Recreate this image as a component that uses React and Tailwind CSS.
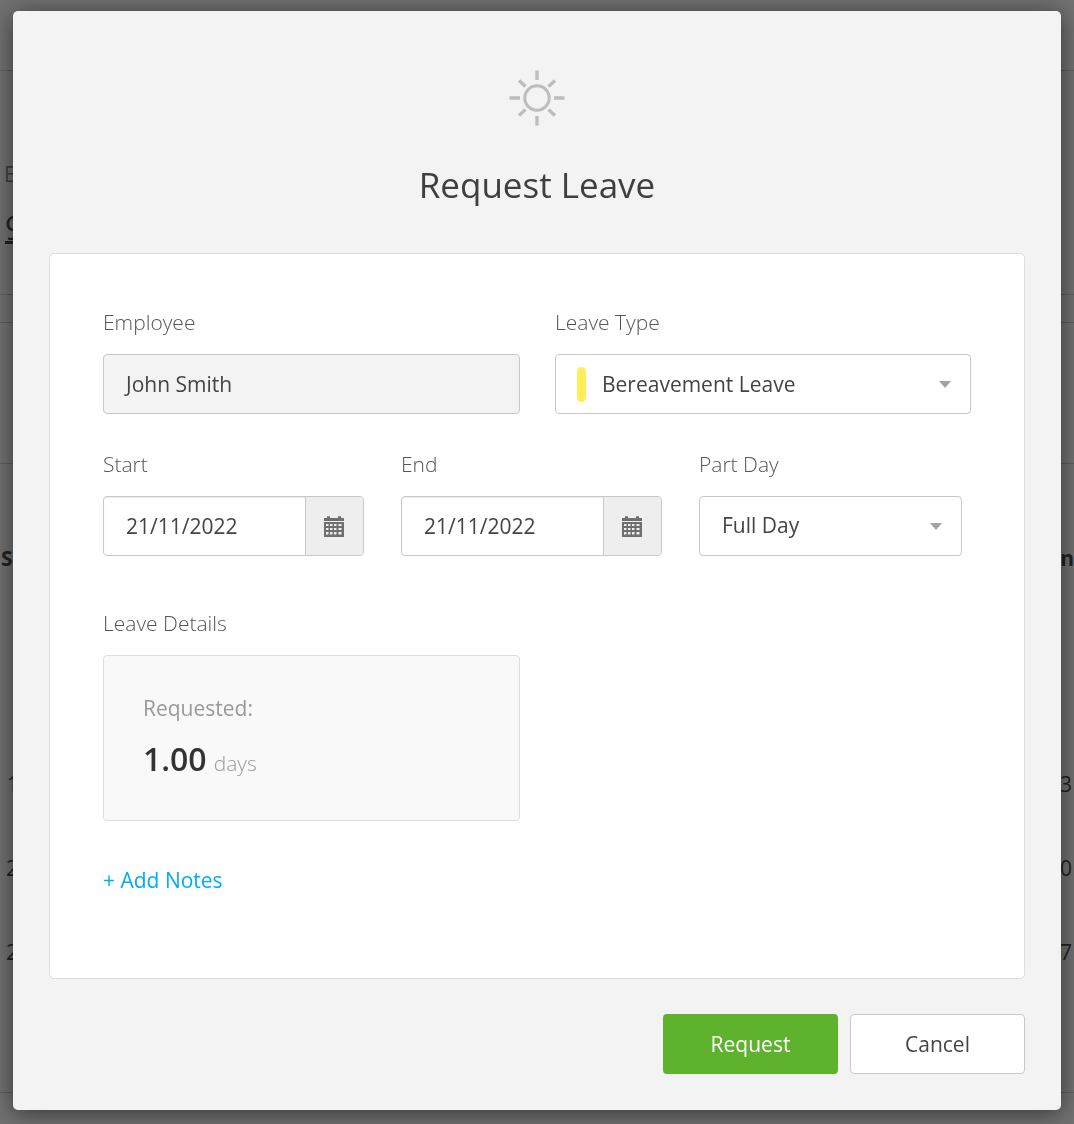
function Sun() {
  return (
    <svg width="56" height="56" viewBox="0 0 56 56" fill="none" stroke="#bdbdbd" strokeWidth="3.4">
      <circle cx="28" cy="28" r="12.2" strokeWidth="3" />
      <path d="M28 0.5V10M28 46V55.5M0.5 28H11M45 28H55.5M10 10.5L16.5 16.5M46 10.5L39.5 16.5M10 45.5L16.5 39.5M46 45.5L39.5 39.5" />
    </svg>
  );
}

function Cal() {
  return (
    <svg width="20" height="22" viewBox="0 0 20 22" fill="#6f6f6f">
      <path d="M0 3H3V1.2H6V3H14V1.2H17V3H20V6H0Z" />
      <path fillRule="evenodd" d="M0 7H20V22H0ZM2 9V11H4.5V9ZM6 9V11H8.5V9ZM10 9V11H12.5V9ZM14.5 9V11H17.5V9ZM2 13V15H4.5V13ZM6 13V15H8.5V13ZM10 13V15H12.5V13ZM14.5 13V15H17.5V13ZM2 17V19.5H4.5V17ZM6 17V19.5H8.5V17ZM10 17V19.5H12.5V17ZM14.5 17V19.5H17.5V17Z" />
    </svg>
  );
}

function Caret() {
  return <span className="w-0 h-0 border-l-[6.5px] border-r-[6.5px] border-t-[7px] border-l-transparent border-r-transparent border-t-[#a3a3a3]" />;
}

function Label({ children }) {
  return <div className="text-[21px] leading-[26px] font-light text-[#555] mb-[19px]">{children}</div>;
}

function DateInput({ label, value, className }) {
  return (
    <div className={className}>
      <Label>{label}</Label>
      <div className="h-[60px] flex border border-[#c8c8c8] rounded-[4px] bg-white overflow-hidden shadow-[inset_0_1px_1px_rgba(0,0,0,0.08)]">
        <div className="flex-1 pl-[22px] pt-[2px] flex items-center text-[21px] text-[#444]">{value}</div>
        <div className="w-[58px] pr-[2px] border-l border-[#c8c8c8] bg-[#eeeeee] flex items-center justify-center">
          <Cal />
        </div>
      </div>
    </div>
  );
}

function BackgroundRow({ left, right, className = "" }) {
  return (
    <div className={`flex justify-between text-[21px] text-[#222] ${className}`}>
      <span>{left}</span>
      <span>{right}</span>
    </div>
  );
}

export default function App() {
  return (
    <div className="relative w-[1074px] h-[1124px] overflow-hidden bg-[#727272] font-['Open_Sans',sans-serif]">
      <div className="h-[71px] border-b border-[#5e5e5e]" />
      <div className="pl-[4px] pt-[89px] text-[21px] leading-[28px] text-[#3f3f3f]">E</div>
      <div className="pl-[5px] pt-[20px] text-[32px] leading-[40px] font-medium text-[#222] underline underline-offset-[1px]">9</div>
      <div className="mt-[46px] border-b border-[#5e5e5e]" />
      <div className="mt-[27px] border-b border-[#5e5e5e]" />
      <div className="mt-[140px] border-b border-[#5e5e5e]" />
      <BackgroundRow left="S" right="n" className="mt-[80px] font-bold leading-[28px] pl-[1px]" />
      <BackgroundRow left="1" right="3" className="mt-[198px] leading-[28px] pl-[7px] pr-[2px]" />
      <BackgroundRow left="2" right="0" className="mt-[56px] leading-[28px] pl-[6px] pr-[2px]" />
      <BackgroundRow left="2" right="7" className="mt-[56px] leading-[28px] pl-[6px] pr-[2px]" />
      <div className="mt-[126px] border-b border-[#5e5e5e]" />

      <div className="absolute left-[13px] top-[11px] w-[1048px] h-[1099px] will-change-transform bg-[#f3f3f3] rounded-[5px] shadow-[0_3px_24px_rgba(0,0,0,0.55)] px-[36px] flex flex-col">
        <div className="flex justify-center pt-[59px]"><Sun /></div>
        <h1 className="text-center text-[35px] leading-[46px] text-[#3f3f3f] mt-[36px]">Request Leave</h1>

        <div className="mt-[45px] h-[726px] border border-[#dedede] rounded-[5px] bg-white pl-[53px] pr-[53px] pt-[55px]">
          <div className="flex gap-[35px]">
            <div className="w-[417px]">
              <Label>Employee</Label>
              <div className="h-[60px] border border-[#c8c8c8] rounded-[4px] bg-[#f3f3f3] pl-[22px] pt-[2px] flex items-center text-[21px] text-[#444]">John Smith</div>
            </div>
            <div className="w-[416px]">
              <Label>Leave Type</Label>
              <div className="h-[60px] border border-[#c8c8c8] rounded-[4px] bg-white pl-[21px] pr-[19px] flex items-center text-[21px] text-[#444]">
                <span className="w-[9px] h-[35px] rounded-full bg-[#ffee58] mr-[16px]" />
                <span className="flex-1 pt-[2px]">Bereavement Leave</span>
                <Caret />
              </div>
            </div>
          </div>

          <div className="flex gap-[37px] mt-[37px]">
            <DateInput label="Start" value="21/11/2022" className="w-[261px]" />
            <DateInput label="End" value="21/11/2022" className="w-[261px]" />
            <div className="w-[263px]">
              <Label>Part Day</Label>
              <div className="h-[60px] border border-[#c8c8c8] rounded-[4px] bg-white pl-[22px] pr-[19px] flex items-center text-[21px] text-[#444]">
                <span className="flex-1">Full Day</span>
                <Caret />
              </div>
            </div>
          </div>

          <div className="mt-[54px]">
            <Label>Leave Details</Label>
            <div className="w-[417px] h-[166px] border border-[#dedede] rounded-[4px] bg-[#f9f9f9] pl-[39px] pt-[38px]">
              <div className="text-[21px] leading-[28px] text-[#999]">Requested:</div>
              <div className="mt-[15px] flex items-baseline gap-[7px]">
                <span className="text-[32px] leading-[44px] font-[550] text-[#333]">1.00</span>
                <span className="text-[21px] font-light text-[#999]">days</span>
              </div>
            </div>
          </div>

          <div className="mt-[45px] text-[21px] leading-[28px] text-[#00aeef]">+ Add Notes</div>
        </div>

        <div className="mt-[35px] flex justify-end gap-[12px]">
          <button className="w-[175px] h-[60px] pt-[2px] rounded-[4px] bg-[#5fb22e] text-white text-[21px]">Request</button>
          <button className="w-[175px] h-[60px] pt-[2px] rounded-[4px] border border-[#c8c8c8] bg-white text-[#444] text-[21px]">Cancel</button>
        </div>
      </div>
    </div>
  );
}
